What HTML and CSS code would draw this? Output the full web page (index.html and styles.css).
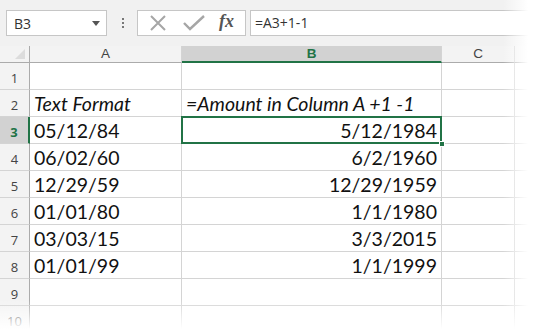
FILE: index.html
```html
<!DOCTYPE html>
<html lang="en">
<head>
    <meta charset="UTF-8">
    <title>Text dates to real dates</title>
    <link rel="stylesheet" href="styles.css">
</head>
<body>
    <div class="toolbar">
        <div class="namebox">
            <span>B3</span>
            <svg class="caret" width="8" height="5" viewBox="0 0 8 5"><path d="M0 0h8L4 5z" fill="#555"/></svg>
        </div>
        <div class="dots">
            <span></span><span></span><span></span>
        </div>
        <div class="fxbtns">
            <svg width="18" height="16" viewBox="0 0 18 16"><path d="M2 1l14 14M16 1L2 15" stroke="#a6a6a6" stroke-width="2" fill="none"/></svg>
            <svg width="22" height="16" viewBox="0 0 22 16"><path d="M1 8l6 6L21 1" stroke="#a6a6a6" stroke-width="2.4" fill="none"/></svg>
            <span class="fx">fx</span>
        </div>
        <div class="formula">=A3+1-1</div>
    </div>

    <div class="sheet">
        <div class="corner"></div>
        <div class="colhead">A</div>
        <div class="colhead active">B</div>
        <div class="colhead">C</div>
        <div class="colhead last"></div>

        <div class="rowhead">1</div><div class="cell"></div><div class="cell"></div><div class="cell"></div><div class="cell last"></div>
        <div class="rowhead">2</div><div class="cell it">Text Format</div><div class="cell it">=Amount in Column A +1 -1</div><div class="cell"></div><div class="cell last"></div>
        <div class="rowhead active">3</div><div class="cell">05/12/84</div><div class="cell num selected">5/12/1984</div><div class="cell"></div><div class="cell last"></div>
        <div class="rowhead">4</div><div class="cell">06/02/60</div><div class="cell num">6/2/1960</div><div class="cell"></div><div class="cell last"></div>
        <div class="rowhead">5</div><div class="cell">12/29/59</div><div class="cell num">12/29/1959</div><div class="cell"></div><div class="cell last"></div>
        <div class="rowhead">6</div><div class="cell">01/01/80</div><div class="cell num">1/1/1980</div><div class="cell"></div><div class="cell last"></div>
        <div class="rowhead">7</div><div class="cell">03/03/15</div><div class="cell num">3/3/2015</div><div class="cell"></div><div class="cell last"></div>
        <div class="rowhead">8</div><div class="cell">01/01/99</div><div class="cell num">1/1/1999</div><div class="cell"></div><div class="cell last"></div>
        <div class="rowhead">9</div><div class="cell"></div><div class="cell"></div><div class="cell"></div><div class="cell last"></div>
        <div class="rowhead">10</div><div class="cell"></div><div class="cell"></div><div class="cell"></div><div class="cell last"></div>
    </div>

    <div class="fade-right"></div>
    <div class="fade-bottom"></div>
</body>
</html>
```

FILE: styles.css
```css
body {
    margin: 0;
    background: #fff;
    font-family: 'Open Sans', sans-serif;
    color: #222;
    overflow: hidden;
}
.toolbar {
    display: flex;
    align-items: center;
    height: 46px;
    background: #f1f1f1;
    padding: 0 0 0 6px;
    box-sizing: border-box;
}
.namebox {
    display: flex;
    align-items: center;
    justify-content: space-between;
    width: 101px;
    height: 26px;
    box-sizing: border-box;
    background: #fff;
    border: 1px solid #c6c6c6;
    padding: 0 6px 0 7px;
    font-size: 14px;
    color: #333;
}
.caret {
    margin-top: 1px;
}
.dots {
    display: flex;
    flex-direction: column;
    gap: 2px;
    margin: 0 13px 0 15px;
}
.dots span {
    width: 2px;
    height: 2px;
    background: #777;
}
.fxbtns {
    display: flex;
    align-items: center;
    width: 109px;
    height: 26px;
    box-sizing: border-box;
    background: #fff;
    border: 1px solid #c6c6c6;
    padding: 0 0 0 11px;
}
.fxbtns svg:first-child {
    margin-right: 16px;
}
.fxbtns svg:nth-child(2) {
    margin-right: 14px;
}
.fx {
    font-family: 'Liberation Serif', serif;
    font-style: italic;
    font-weight: bold;
    font-size: 18px;
    color: #555;
    margin-top: -3px;
}
.formula {
    flex: 1;
    height: 26px;
    box-sizing: border-box;
    margin-left: 4px;
    background: #fff;
    border: 1px solid #c6c6c6;
    border-right: none;
    padding: 2px 0 0 4px;
    font-size: 14px;
    color: #333;
}
.sheet {
    display: grid;
    grid-template-columns: 30px 152px 260px 73px 1fr;
    grid-template-rows: 17px repeat(10, 27px);
}
.corner, .colhead {
    background: #f3f3f3;
    border-bottom: 1px solid #ababab;
    border-right: 1px solid #d4d4d4;
    box-sizing: border-box;
}
.corner {
    position: relative;
    border-right: 1px solid #ababab;
}
.corner::after {
    content: "";
    position: absolute;
    right: 4px;
    bottom: 3px;
    border-style: solid;
    border-width: 0 0 10px 10px;
    border-color: transparent transparent #dcdcdc transparent;
}
.colhead {
    text-align: center;
    font-family: 'Liberation Sans', sans-serif;
    font-size: 13.5px;
    line-height: 16px;
    color: #444;
}
.colhead.active {
    background: #d2d2d2;
    color: #217346;
    font-weight: bold;
    border-bottom: 2px solid #217346;
}
.colhead.last {
    border-right: none;
}
.rowhead {
    background: #f3f3f3;
    border-right: 1px solid #ababab;
    border-bottom: 1px solid #d4d4d4;
    box-sizing: border-box;
    text-align: center;
    font-size: 13px;
    line-height: 30px;
    color: #444;
}
.rowhead.active {
    background: #d2d2d2;
    color: #217346;
    font-weight: bold;
    border-right: 2px solid #217346;
}
.cell {
    border-right: 1px solid #d4d4d4;
    border-bottom: 1px solid #d4d4d4;
    box-sizing: border-box;
    font-family: 'Lato', sans-serif;
    font-size: 19.5px;
    line-height: 28px;
    padding: 0 4px;
    white-space: nowrap;
    color: #111;
}
.cell.it {
    font-style: italic;
}
.cell.num {
    text-align: right;
}
.cell.last {
    border-right: none;
}
.cell.selected {
    position: relative;
}
.cell.selected::after {
    content: "";
    position: absolute;
    left: -1px;
    top: -1px;
    right: -1px;
    bottom: -1px;
    border: 2px solid #217346;
}
.cell.selected::before {
    content: "";
    position: absolute;
    right: -4px;
    bottom: -4px;
    width: 6px;
    height: 6px;
    background: #217346;
    border: 1px solid #fff;
    box-sizing: border-box;
    z-index: 1;
}
.fade-right {
    position: absolute;
    top: 0;
    right: 0;
    width: 36px;
    height: 100%;
    background: linear-gradient(to right, rgba(255,255,255,0), #fff 70%);
}
.fade-bottom {
    position: absolute;
    left: 0;
    bottom: 0;
    width: 100%;
    height: 34px;
    background: linear-gradient(to bottom, rgba(255,255,255,0), #fff 85%);
}
```
